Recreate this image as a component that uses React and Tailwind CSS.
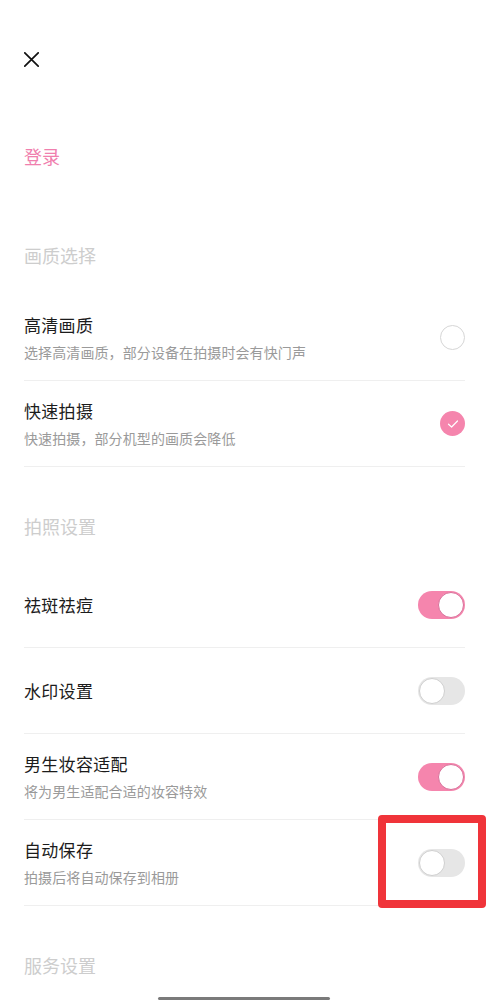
import { useState } from "react";

const pink = "bg-[#f585ad]";

function Toggle({ on }) {
  return (
    <div
      className={`relative h-[28px] w-[47px] shrink-0 rounded-full ${
        on ? pink : "bg-[#e6e6e6]"
      }`}
    >
      <div
        className={`absolute top-[1px] h-[26px] w-[26px] rounded-full bg-white ${
          on
            ? "right-[1px] border border-[#d9709a]"
            : "left-[1px] border border-[#cfcfcf]"
        }`}
      />
    </div>
  );
}

function Radio({ checked }) {
  if (checked) {
    return (
      <div className={`flex h-[25px] w-[25px] shrink-0 items-center justify-center rounded-full ${pink}`}>
        <svg width="12" height="10" viewBox="0 0 12 10" fill="none">
          <path d="M1.5 5.2 L4.6 8 L10.5 2" stroke="white" strokeWidth="1.2" strokeLinecap="round" strokeLinejoin="round" />
        </svg>
      </div>
    );
  }
  return <div className="h-[25px] w-[25px] shrink-0 rounded-full border border-[#d6d6d6]" />;
}

function Row({ title, desc, right }) {
  return (
    <div className="flex h-[86px] items-center justify-between border-b border-[#efefef]">
      <div className="flex flex-col">
        <div className="text-[17px] leading-6 tracking-[0.3px] text-[#1c1c1c]">{title}</div>
        {desc && (
          <div className="mt-[5px] text-[14px] leading-5 tracking-[0.1px] text-[#9a9a9a]">{desc}</div>
        )}
      </div>
      {right}
    </div>
  );
}

function Header({ children, className }) {
  return (
    <div className={`text-[18px] leading-6 text-[#cdcdcd] ${className}`}>{children}</div>
  );
}

export default function App() {
  const [quality] = useState("fast");
  return (
    <div className="relative h-[1000px] overflow-hidden bg-white font-['Noto_Sans_CJK_SC','Noto_Sans',sans-serif]">
      <div className="pl-6 pr-[23px]">
        {/* Close */}
        <div className="pt-[52px]">
          <svg width="15" height="15" viewBox="0 0 15 15" fill="none">
            <path d="M0.8 0.8 L14.2 14.2 M14.2 0.8 L0.8 14.2" stroke="#111" strokeWidth="1.7" strokeLinecap="round" />
          </svg>
        </div>

        <div className="mt-[77px] text-[18px] leading-6 text-[#f07fae]">登录</div>

        <Header className="mt-[75px]">画质选择</Header>
        <div className="mt-[28px]">
          <Row
            title="高清画质"
            desc="选择高清画质，部分设备在拍摄时会有快门声"
            right={<Radio checked={quality === "hd"} />}
          />
          <Row
            title="快速拍摄"
            desc="快速拍摄，部分机型的画质会降低"
            right={<Radio checked={quality === "fast"} />}
          />
        </div>

        <Header className="mt-[47px]">拍照设置</Header>
        <div className="mt-[24px]">
          <Row title="祛斑祛痘" right={<Toggle on />} />
          <Row title="水印设置" right={<Toggle on={false} />} />
          <Row title="男生妆容适配" desc="将为男生适配合适的妆容特效" right={<Toggle on />} />
          <Row title="自动保存" desc="拍摄后将自动保存到相册" right={<Toggle on={false} />} />
        </div>

        <Header className="mt-[47px]">服务设置</Header>
      </div>

      {/* home indicator */}
      <div className="absolute left-[158px] top-[997px] h-[3px] w-[172px] rounded-full bg-[#7a7a7a]" />

      {/* annotation box */}
      <div className="absolute left-[378px] top-[815px] h-[93px] w-[108px] rounded-[4px] border-[8px] border-[#f0343a]" />
    </div>
  );
}
